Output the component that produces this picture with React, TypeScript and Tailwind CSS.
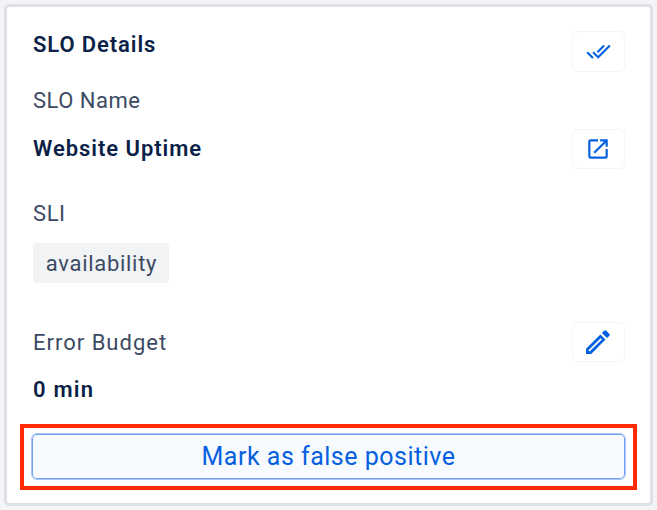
import type { ReactNode } from "react";

function IconButton({ label, className, children }: { label: string; className: string; children: ReactNode }) {
  return (
    <button
      aria-label={label}
      className={`flex w-[53px] items-center justify-center rounded-[6px] border border-[#f5f5f7] bg-white pr-px text-[#0560df] ${className}`}
    >
      {children}
    </button>
  );
}

export default function App() {
  return (
    <div className="h-[510px] w-[657px] bg-[#f3f4f6] pt-1 pl-1 font-['Roboto',sans-serif] text-[22px] leading-[28px] text-[#3c4a63]">
      <div className="h-[502px] w-[649px] rounded-[5px] border-3 border-[#dfe0e4] bg-white">
        <div className="flex h-[417px] justify-between pr-[25px] pl-[26px]">
          <div className="flex flex-col items-start whitespace-nowrap">
            <h2 className="mt-[24px] font-semibold tracking-[0.9px] text-[#0b1f47]">SLO Details</h2>
            <p className="mt-[28px] tracking-[0.5px]">SLO Name</p>
            <p className="mt-[20px] font-semibold tracking-[0.95px] text-[#0b1f47]">Website Uptime</p>
            <p className="mt-[37px] tracking-[0.6px]">SLI</p>
            <span className="mt-[15px] flex h-[40px] w-[136px] items-center justify-center rounded-[4px] bg-[#f2f3f5] pt-px pl-px tracking-[0.7px]">
              availability
            </span>
            <p className="mt-[46px] tracking-[1px]">Error Budget</p>
            <p className="mt-[19px] font-semibold tracking-[1.2px] text-[#0b1f47]">0 min</p>
          </div>
          <div className="flex flex-col">
            <IconButton label="Acknowledge" className="mt-[24px] h-[41px]">
              <svg viewBox="0 0 24 24" className="size-[25px]" fill="currentColor">
                <path d="M18 7l-1.41-1.41-6.34 6.34 1.41 1.41L18 7zm4.24-1.41L11.66 16.17 7.48 12l-1.41 1.41L11.66 19l12-12-1.42-1.41zM.41 13.41L6 19l1.41-1.41L1.83 12 .41 13.41z" />
              </svg>
            </IconButton>
            <IconButton label="Open" className="mt-[57px] h-[40px]">
              <svg viewBox="0 0 24 24" className="size-[26px]" fill="currentColor">
                <path d="M19 19H5V5h7V3H5c-1.11 0-2 .9-2 2v14c0 1.1.89 2 2 2h14c1.1 0 2-.9 2-2v-7h-2v7zM14 3v2h3.59l-9.83 9.83 1.41 1.41L19 6.41V10h2V3h-7z" />
              </svg>
            </IconButton>
            <IconButton label="Edit" className="mt-[153px] h-[40px]">
              <svg viewBox="0 0 24 24" className="size-[24px]" fill="currentColor">
                <path
                  fillRule="evenodd"
                  d="M0 24V18.8L14.4 4.5l5.1 5.1L5.2 24zM2.7 21.3h1.2L15.9 9.5l-1.3-1.3L2.7 20.1z"
                />
                <path d="M15.9 3l2.2-2.2q1.1-1.1 2.2 0l2.9 2.9q1.1 1.1 0 2.2L21 8.1z" />
              </svg>
            </IconButton>
          </div>
        </div>
        <div className="ml-[13px] h-[66px] w-[617px] border-4 border-[#ff2a00] pt-[5px] pl-[7px]">
          <button className="flex h-[47px] w-[595px] items-center justify-center rounded-[6px] border border-[#aac6f8] bg-[#f7fbff] text-[25px] tracking-[0.5px] text-[#0560df] shadow-[inset_0_0_0_1px_#739ff0]">
            Mark as false positive
          </button>
        </div>
      </div>
    </div>
  );
}
